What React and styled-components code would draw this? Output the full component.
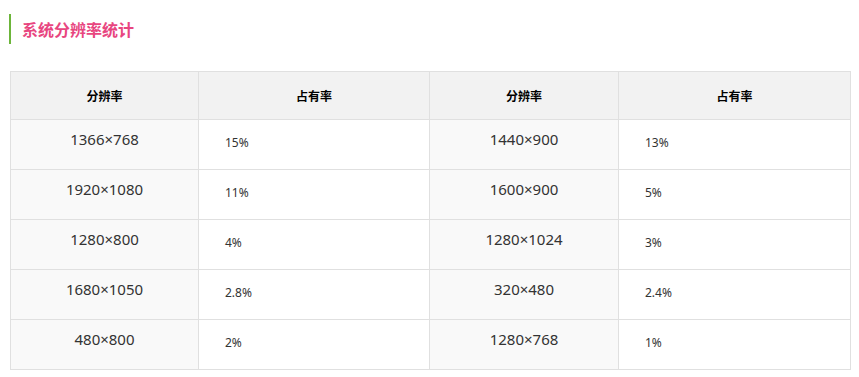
import React from 'react';
import styled, { createGlobalStyle } from 'styled-components';

const GlobalStyle = createGlobalStyle`
  html, body {
    margin: 0;
    padding: 0;
    background: #ffffff;
    font-family: "Noto Sans", "Noto Sans CJK SC", sans-serif;
  }
`;

const Page = styled.div`
  width: 859px;
  padding: 14px 9px 0 10px;
  box-sizing: border-box;
`;

const Title = styled.h2`
  margin: 0 0 27px -1px;
  padding-left: 11px;
  border-left: 2px solid #6cb53a;
  height: 30px;
  line-height: 30px;
  font-size: 16px;
  font-weight: 700;
  color: #e8467f;
  font-family: "Noto Sans CJK SC", sans-serif;
`;

const Table = styled.table`
  width: 840px;
  border-collapse: collapse;
  table-layout: fixed;
  border: 1px solid #e0e0e0;
`;

const HeadCell = styled.th`
  height: 47px;
  padding: 0;
  background: #f2f2f2;
  border: 1px solid #e0e0e0;
  font-size: 12px;
  font-weight: 700;
  color: #000;
  text-align: center;
  font-family: "Noto Sans CJK SC", sans-serif;
`;

const ResCell = styled.td`
  height: 38px;
  padding: 0 0 11px;
  background: #f9f9f9;
  border: 1px solid #e0e0e0;
  text-align: center;
  font-size: 15px;
  line-height: 20px;
  color: #333;
  vertical-align: middle;
`;

const RateCell = styled.td`
  height: 46px;
  padding: 0 0 3px 26px;
  background: #ffffff;
  border: 1px solid #e0e0e0;
  font-size: 12px;
  line-height: 16px;
  color: #333;
  vertical-align: middle;
`;

const rows = [
  ['1366×768', '15%', '1440×900', '13%'],
  ['1920×1080', '11%', '1600×900', '5%'],
  ['1280×800', '4%', '1280×1024', '3%'],
  ['1680×1050', '2.8%', '320×480', '2.4%'],
  ['480×800', '2%', '1280×768', '1%'],
];

function App() {
  return (
    <Page>
      <GlobalStyle />
      <Title>系统分辨率统计</Title>
      <Table>
        <colgroup>
          <col style={{ width: 188 }} />
          <col style={{ width: 231 }} />
          <col style={{ width: 189 }} />
          <col style={{ width: 232 }} />
        </colgroup>
        <thead>
          <tr>
            <HeadCell>分辨率</HeadCell>
            <HeadCell>占有率</HeadCell>
            <HeadCell>分辨率</HeadCell>
            <HeadCell>占有率</HeadCell>
          </tr>
        </thead>
        <tbody>
          {rows.map((r, i) => (
            <tr key={i}>
              <ResCell>{r[0]}</ResCell>
              <RateCell>{r[1]}</RateCell>
              <ResCell>{r[2]}</ResCell>
              <RateCell>{r[3]}</RateCell>
            </tr>
          ))}
        </tbody>
      </Table>
    </Page>
  );
}

export default App;
